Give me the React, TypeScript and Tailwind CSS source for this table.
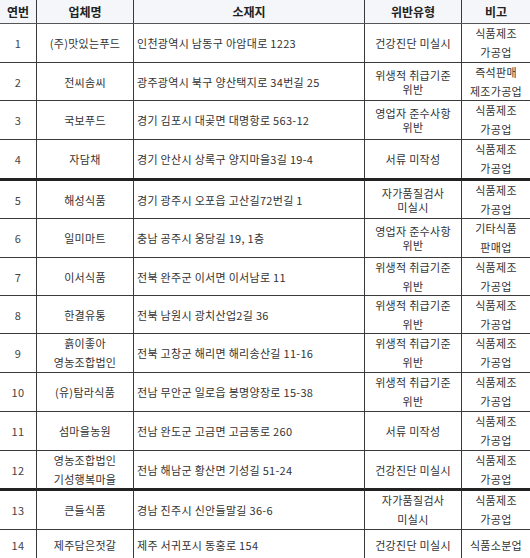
type Cell = string | string[];

interface Row {
  no: string;
  name: Cell;
  addr: string;
  type: Cell;
  note: Cell;
  tight?: boolean;
  thick?: boolean;
  h: string;
}

const rows: Row[] = [
  { no: "1", name: "(주)맛있는푸드", addr: "인천광역시 남동구 아암대로 1223", type: "건강진단 미실시", note: ["식품제조", "가공업"], h: "h-[39px]" },
  { no: "2", name: "전씨솜씨", addr: "광주광역시 북구 양산택지로 34번길 25", type: ["위생적 취급기준", "위반"], note: ["즉석판매", "제조가공업"], tight: true, h: "h-[38px]" },
  { no: "3", name: "국보푸드", addr: "경기 김포시 대곶면 대명항로 563-12", type: ["영업자 준수사항", "위반"], note: ["식품제조", "가공업"], tight: true, h: "h-[39px]" },
  { no: "4", name: "자담채", addr: "경기 안산시 상록구 양지마을3길 19-4", type: "서류 미작성", note: ["식품제조", "가공업"], thick: true, h: "h-[41px]" },
  { no: "5", name: "해성식품", addr: "경기 광주시 오포읍 고산길72번길 1", type: ["자가품질검사", "미실시"], note: ["식품제조", "가공업"], tight: true, h: "h-[38px]" },
  { no: "6", name: "일미마트", addr: "충남 공주시 웅당길 19, 1층", type: ["영업자 준수사항", "위반"], note: ["기타식품", "판매업"], tight: true, h: "h-[39px]" },
  { no: "7", name: "이서식품", addr: "전북 완주군 이서면 이서남로 11", type: ["위생적 취급기준", "위반"], note: ["식품제조", "가공업"], h: "h-[38px]" },
  { no: "8", name: "한결유통", addr: "전북 남원시 광치산업2길 36", type: ["위생적 취급기준", "위반"], note: ["식품제조", "가공업"], h: "h-[38px]" },
  { no: "9", name: ["흙이좋아", "영농조합법인"], addr: "전북 고창군 해리면 해리송산길 11-16", type: ["위생적 취급기준", "위반"], note: ["식품제조", "가공업"], h: "h-[39px]" },
  { no: "10", name: "(유)탐라식품", addr: "전남 무안군 일로읍 봉명양장로 15-38", type: ["위생적 취급기준", "위반"], note: ["식품제조", "가공업"], h: "h-[39px]" },
  { no: "11", name: "섬마을농원", addr: "전남 완도군 고금면 고금동로 260", type: "서류 미작성", note: ["식품제조", "가공업"], h: "h-[39px]" },
  { no: "12", name: ["영농조합법인", "기성행복마을"], addr: "전남 해남군 황산면 기성길 51-24", type: "건강진단 미실시", note: ["식품제조", "가공업"], thick: true, h: "h-[40px]" },
  { no: "13", name: "큰들식품", addr: "경남 진주시 신안들말길 36-6", type: ["자가품질검사", "미실시"], note: ["식품제조", "가공업"], h: "h-[39px]" },
  { no: "14", name: "제주담은젓갈", addr: "제주 서귀포시 동홍로 154", type: "건강진단 미실시", note: "식품소분업", h: "h-[30px]" },
];

function Lines({ value, tight }: { value: Cell; tight?: boolean }) {
  const list = Array.isArray(value) ? value : [value];
  return (
    <div className={tight ? "leading-[14px]" : "leading-[19px]"}>
      {list.map((line) => (
        <div key={line}>{line}</div>
      ))}
    </div>
  );
}

const cols = "grid grid-cols-[37px_97px_231px_97px_1fr]";
const cell = "flex items-center justify-center border-r border-[#3a3a3a] text-center";

export default function App() {
  return (
    <div
      className="h-[558px] w-[530px] overflow-hidden bg-white text-[11px] tracking-[0.3px] text-[#333]"
      style={{ fontFamily: '"Noto Sans CJK KR", "Noto Sans", sans-serif' }}
    >
      <div className={`${cols} h-[24px] border-b border-[#555] bg-[#f4f6f9] text-[12px] font-bold tracking-normal text-[#222]`}>
        <div className={cell}>연번</div>
        <div className={cell}>업체명</div>
        <div className={cell}>소재지</div>
        <div className={cell}>위반유형</div>
        <div className="flex items-center justify-center">비고</div>
      </div>
      {rows.map((r, i) => (
        <div
          key={r.no}
          className={`${cols} ${r.h} ${
            i === rows.length - 1
              ? ""
              : r.thick
                ? "border-b-[3px] border-[#222]"
                : "border-b border-[#3a3a3a]"
          }`}
        >
          <div className={`${cell} text-[#444]`}>{r.no}</div>
          <div className={cell}>
            <Lines value={r.name} />
          </div>
          <div className="flex items-center whitespace-nowrap border-r border-[#3a3a3a] pl-[3px]">{r.addr}</div>
          <div className={cell}>
            <Lines value={r.type} tight={r.tight} />
          </div>
          <div className="flex items-center justify-center text-center">
            <Lines value={r.note} />
          </div>
        </div>
      ))}
    </div>
  );
}
